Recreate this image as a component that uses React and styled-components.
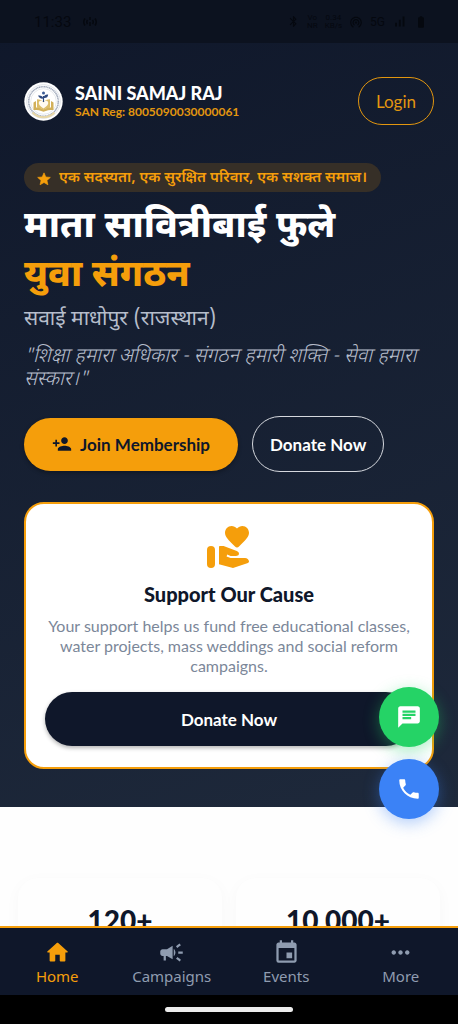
import styled, { createGlobalStyle } from "styled-components";
import {
  MdBatteryFull,
  MdBluetooth,
  MdCampaign,
  MdChat,
  MdEvent,
  MdMoreHoriz,
  MdPersonAdd,
  MdPhone,
  MdSignalCellularAlt,
  MdWifiTethering,
} from "react-icons/md";

const latin = `Lato, "Noto Sans", "Liberation Sans", sans-serif`;
const hindi = `"Noto Sans Devanagari", "Noto Sans", Lato, sans-serif`;

const GlobalStyle = createGlobalStyle`
  * {
    box-sizing: border-box;
  }
  body {
    margin: 0;
    background: #000000;
    font-family: ${latin};
  }
  h1, h2, p {
    margin: 0;
  }
  button {
    font-family: inherit;
    cursor: pointer;
  }
  svg {
    flex-shrink: 0;
  }
`;

const Container = styled.div`
  height: 100vh;
  display: flex;
  flex-direction: column;
`;

const StatusBar = styled.div`
  position: fixed;
  top: 0;
  left: 0;
  right: 0;
  z-index: 2;
  height: 43px;
  padding: 0 30px 0 34px;
  display: flex;
  align-items: center;
  justify-content: space-between;
  background-color: #0c121f;
  color: #05080f;
  font-family: Roboto, sans-serif;
`;

const StatusGroup = styled.div`
  display: flex;
  align-items: center;
  gap: ${(props) => props.$gap}px;
  font-size: 12px;
`;

const Clock = styled.span`
  font-size: 15px;
`;

const Rate = styled.span`
  font-size: 8px;
  line-height: 8px;
  text-align: center;
`;

const Content = styled.main`
  flex: 1;
  min-height: 0;
  overflow: hidden;
  background-color: #fefefe;
`;

const Hero = styled.section`
  padding: 77px 24px 38px;
  background: linear-gradient(160deg, #0f172a, #1e293b);
  color: white;
`;

const Header = styled.header`
  display: flex;
  align-items: center;
  gap: 12px;
  margin-bottom: 38px;
`;

const Brand = styled.div`
  flex: 1;
`;

const BrandName = styled.p`
  font-size: 18px;
  line-height: 22px;
  font-weight: 900;
`;

const BrandReg = styled.p`
  font-size: 12px;
  line-height: 16px;
  font-weight: 700;
  color: #e2960f;
`;

const Button = styled.button`
  display: flex;
  align-items: center;
  justify-content: center;
  gap: 8px;
  width: ${(props) => (props.$wide ? "100%" : "auto")};
  height: ${(props) => props.$height}px;
  padding: 0 ${(props) => props.$pad}px;
  border: ${(props) => (props.$line ? "1px solid " + props.$line : "none")};
  border-radius: 28px;
  background-color: ${(props) => props.$fill || "transparent"};
  color: ${(props) => props.$color || "white"};
  font-size: 17px;
  font-weight: ${(props) => (props.$light ? 400 : 700)};
  white-space: nowrap;
  box-shadow: ${(props) => (props.$fill ? "0 2px 4px rgba(0, 0, 0, 0.3)" : "none")};
`;

const Badge = styled.div`
  width: fit-content;
  height: 29px;
  padding: 2px 14px 0 12px;
  margin-bottom: 12px;
  display: flex;
  align-items: center;
  gap: 7px;
  border-radius: 15px;
  background-color: #362f27;
  color: #f59e0b;
  font-family: ${hindi};
  font-size: 15px;
  font-weight: 600;
  white-space: nowrap;
`;

const Title = styled.h1`
  font-family: ${hindi};
  font-size: 37px;
  line-height: 49px;
  font-weight: 800;
  span {
    display: block;
    color: #f59e0b;
  }
`;

const Place = styled.p`
  margin: 6px 0 14px;
  font-family: ${hindi};
  font-size: 21px;
  line-height: 24px;
  font-weight: 400;
  color: #b6bdcb;
`;

const Quote = styled.p`
  margin-bottom: 24px;
  font-family: ${hindi};
  font-size: 20px;
  line-height: 23px;
  font-style: italic;
  font-weight: 300;
  color: #b6bdcb;
`;

const Actions = styled.div`
  display: flex;
  align-items: center;
  gap: 14px;
  margin-bottom: 30px;
`;

const SupportCard = styled.section`
  padding: 20px 19px 21px;
  display: flex;
  flex-direction: column;
  align-items: center;
  border: 2px solid #f59e0b;
  border-radius: 20px;
  background-color: white;
  text-align: center;
`;

const SupportTitle = styled.h2`
  margin: 10px 0;
  font-size: 20px;
  line-height: 24px;
  font-weight: 900;
  color: #0f172a;
`;

const SupportText = styled.p`
  margin-bottom: 16px;
  font-size: 16px;
  line-height: 20px;
  color: #7b8799;
`;

const Stats = styled.section`
  padding: 71px 18px 0;
  display: grid;
  grid-template-columns: 1fr 1fr;
  gap: 14px;
`;

const Stat = styled.div`
  height: 130px;
  padding-top: 24px;
  border-radius: 20px;
  background-color: #fefefe;
  box-shadow: 0 4px 16px rgba(15, 23, 42, 0.03);
  text-align: center;
  color: #0f172a;
  font-size: 28px;
  line-height: 36px;
  font-weight: 900;
`;

const Floating = styled.div`
  position: fixed;
  right: 19px;
  bottom: 205px;
  z-index: 1;
  display: flex;
  flex-direction: column;
  gap: 12px;
`;

const RoundButton = styled.button`
  width: 60px;
  height: 60px;
  display: flex;
  align-items: center;
  justify-content: center;
  border: none;
  border-radius: 50%;
  background-color: ${(props) => props.$color};
  color: white;
  box-shadow: 0 4px 16px ${(props) => props.$color}66;
`;

const Nav = styled.nav`
  height: 69px;
  padding-top: 11px;
  display: grid;
  grid-template-columns: repeat(4, 1fr);
  border-top: 2px solid #f59e0b;
  background-color: #0f172a;
`;

const NavLink = styled.a`
  display: flex;
  flex-direction: column;
  align-items: center;
  font-family: "Noto Sans", sans-serif;
  font-size: 15px;
  line-height: 21px;
  text-decoration: none;
  color: ${(props) => (props.$active ? "#f59e0b" : "#8f9cb0")};
`;

const GestureBar = styled.div`
  height: 29px;
  display: flex;
  align-items: center;
  justify-content: center;
  background-color: black;
`;

const Handle = styled.div`
  width: 28%;
  height: 5px;
  border-radius: 3px;
  background-color: #ececec;
`;

const Logo = () => (
  <svg width="39" height="39" viewBox="0 0 39 39" fill="none" aria-hidden="true">
    <circle cx="19.5" cy="19.5" r="19.2" fill="#fff" />
    <circle cx="19.5" cy="19.5" r="16.8" stroke="#c3c9d3" strokeWidth=".5" />
    <circle cx="19.5" cy="19.5" r="14.8" stroke="#a3acbd" strokeWidth="1.6" strokeDasharray="1.3 .4" />
    <path d="M8.5 30.5a15 15 0 0 0 22 0" stroke="#e8d7a6" strokeWidth="2" />
    <circle cx="19.5" cy="19.5" r="12.8" fill="#fff" stroke="#c3c9d3" strokeWidth=".4" />
    <path d="M9.5 20.5 12 19v6.5c3 0 5.5.5 7.5 2 2-1.5 4.5-2 7.5-2V19l2.5 1.5V28c-4 0-7 .3-10 1.8-3-1.5-6-1.8-10-1.8Z" fill="#d2b05a" />
    <path d="M19.5 28c-2-2-5-2-6.500-2.200v-8.500c3 .2 5 1 6.500 3 1.500-2 3.500-2.800 6.500-3v8.500c-1.500.2-4.500.2-6.500 2.200Z" fill="#dcbd69" />
    <path d="M19.5 26.500c-3.500-2.200-5.300-4.300-4.600-6.500.9-2 3.700-1.600 4.600.6.900-2.200 3.700-2.600 4.600-.6.700 2.200-1.100 4.300-4.600 6.500Z" fill="#fffaf0" />
    <path d="M19.5 20v-6" stroke="#2f4a80" strokeWidth="1.2" />
    <path d="M19.5 16.500c-2.500.5-4.500-.5-5.500-3 2.500-.5 4.800.5 5.500 3Zm0-.5c.3-2.500 2-3.800 4.700-3.500-.2 2.600-2 4-4.700 3.500Z" fill="#2f4a80" />
    <circle cx="19.5" cy="11" r="1.5" fill="#3c5c96" />
  </svg>
);

const StarIcon = () => (
  <svg width="16" height="16" viewBox="0 0 24 24" fill="currentColor" stroke="currentColor" strokeWidth="1" strokeLinejoin="round" aria-hidden="true">
    <path d="m12 2.8 2.7 6.2 6.8.6-5.1 4.5 1.5 6.6L12 17.2l-5.9 3.5 1.5-6.6-5.1-4.5 6.8-.6Z" />
  </svg>
);

const HandIcon = () => (
  <svg width="48" height="48" viewBox="0 0 24 24" fill="#f59e0b" aria-hidden="true">
    <rect x="1" y="11" width="4" height="11" rx="2" />
    <path d="M7 11.500c0-.3.200-.5.500-.5h1.800l6.600 2.500c.9.300 1.300 1.200 1 1.800-.2.500-.7.700-1.400.7h-2.700l-1.700-.7-.3.900 2 .8H20c1 0 2 .9 2 1.700 0 .5-.4.700-.9.900L14 22l-7-1.900Z" />
    <path d="M16 11.800c-.4 0-.7-.2-1-.5-3.200-3.200-5-4.900-5-6.900C10 2.500 11.400 1 13.300 1c1 0 2 .5 2.700 1.300C16.700 1.500 17.700 1 18.700 1 20.600 1 22 2.500 22 4.400c0 2-1.800 3.700-5 6.900-.3.300-.6.500-1 .5Z" />
  </svg>
);

const HomeIcon = ({ size }) => (
  <svg width={size} height={size} viewBox="0 0 24 24" fill="currentColor" aria-hidden="true">
    <path d="M10 19v-5h4v5c0 .55.45 1 1 1h3c.55 0 1-.45 1-1v-7h1.7c.46 0 .68-.57.33-.87L12.67 3.6c-.38-.34-.96-.34-1.34 0l-8.36 7.53c-.34.3-.13.87.33.87H5v7c0 .55.45 1 1 1h3c.55 0 1-.45 1-1Z" />
  </svg>
);

const HotspotIcon = () => (
  <svg width="16" height="12" viewBox="0 0 16 12" fill="none" stroke="currentColor" strokeWidth="1.5" aria-hidden="true">
    <path d="M3 2.5Q.5 6 3 9.5M5.5 4Q4 6 5.5 8M13 2.5Q15.5 6 13 9.5M10.5 4Q12 6 10.5 8M8 1v3M8 6v4" />
  </svg>
);

const links = [
  { name: "Home", icon: HomeIcon },
  { name: "Campaigns", icon: MdCampaign },
  { name: "Events", icon: MdEvent },
  { name: "More", icon: MdMoreHoriz },
];

const App = () => {
  return (
    <Container>
      <GlobalStyle />
      <StatusBar>
        <StatusGroup $gap={11}>
          <Clock>11:33</Clock>
          <HotspotIcon />
        </StatusGroup>
        <StatusGroup $gap={7}>
          <MdBluetooth size={13} />
          <Rate>Vo<br />NR</Rate>
          <Rate>0.34<br />KB/s</Rate>
          <MdWifiTethering size={14} />
          <span>5G</span>
          <MdSignalCellularAlt size={15} />
          <MdBatteryFull size={14} />
        </StatusGroup>
      </StatusBar>
      <Content>
        <Hero>
          <Header>
            <Logo />
            <Brand>
              <BrandName>SAINI SAMAJ RAJ</BrandName>
              <BrandReg>SAN Reg: 8005090030000061</BrandReg>
            </Brand>
            <Button $light $height={48} $pad={17} $line="#e2960f" $color="#e2960f">
              Login
            </Button>
          </Header>
          <Badge>
            <StarIcon />
            एक सदस्यता, एक सुरक्षित परिवार, एक सशक्त समाज।
          </Badge>
          <Title>
            माता सावित्रीबाई फुले
            <span>युवा संगठन</span>
          </Title>
          <Place>सवाई माधोपुर (राजस्थान)</Place>
          <Quote>"शिक्षा हमारा अधिकार - संगठन हमारी शक्ति - सेवा हमारा संस्कार।"</Quote>
          <Actions>
            <Button $height={53} $pad={28} $fill="#f59e0b" $color="#0f172a">
              <MdPersonAdd size={20} />
              Join Membership
            </Button>
            <Button $height={56} $pad={17} $line="#d5d8de">
              Donate Now
            </Button>
          </Actions>
          <SupportCard>
            <HandIcon />
            <SupportTitle>Support Our Cause</SupportTitle>
            <SupportText>
              Your support helps us fund free educational classes, water projects, mass weddings and
              social reform campaigns.
            </SupportText>
            <Button $wide $height={54} $pad={20} $fill="#0f172a">
              Donate Now
            </Button>
          </SupportCard>
        </Hero>
        <Stats>
          <Stat>120+</Stat>
          <Stat>10,000+</Stat>
        </Stats>
      </Content>
      <Floating>
        <RoundButton $color="#25d366" aria-label="Chat">
          <MdChat size={26} />
        </RoundButton>
        <RoundButton $color="#3b82f6" aria-label="Call">
          <MdPhone size={26} />
        </RoundButton>
      </Floating>
      <Nav>
        {links.map((link) => (
          <NavLink key={link.name} href="#" $active={link.name === "Home"}>
            <link.icon size={27} />
            {link.name}
          </NavLink>
        ))}
      </Nav>
      <GestureBar>
        <Handle />
      </GestureBar>
    </Container>
  );
};

export default App;
